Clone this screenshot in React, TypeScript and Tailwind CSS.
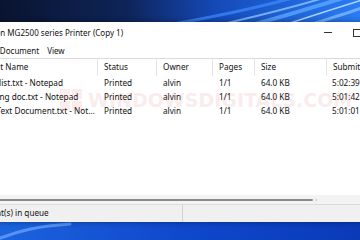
import React from 'react';

const columns = ['Document Name', 'Status', 'Owner', 'Pages', 'Size', 'Submitted'];

const jobs = [
  { name: 'Shipping list.txt - Notepad', status: 'Printed', owner: 'alvin', pages: '1/1', size: '64.0 KB', time: '5:02:39 PM  2/5/2023' },
  { name: 'Onboarding doc.txt - Notepad', status: 'Printed', owner: 'alvin', pages: '1/1', size: '64.0 KB', time: '5:01:42 PM  2/5/2023' },
  { name: 'New Job Text Document.txt - Notepad', status: 'Printed', owner: 'alvin', pages: '1/1', size: '64.0 KB', time: '5:01:01 PM  2/5/2023' },
];

function PrinterIcon() {
  return (
    <svg width="13" height="13" viewBox="0 0 16 16" className="shrink-0">
      <rect x="4" y="1.5" width="8" height="4" fill="#fff" stroke="#555" />
      <rect x="1.5" y="5.5" width="13" height="6" rx="1" fill="#8a8f98" stroke="#4a4f57" />
      <rect x="4" y="9.5" width="8" height="5" fill="#fff" stroke="#555" />
    </svg>
  );
}

function Wallpaper() {
  return (
    <svg className="absolute inset-0" width="360" height="240" viewBox="0 0 360 240">
      <defs>
        <linearGradient id="top" x1="0" y1="0" x2="1" y2="0">
          <stop offset="0" stopColor="#0a1430" />
          <stop offset="0.35" stopColor="#0e2458" />
          <stop offset="0.6" stopColor="#1549b8" />
          <stop offset="1" stopColor="#2a7cf5" />
        </linearGradient>
        <linearGradient id="bot" x1="0" y1="0" x2="1" y2="0">
          <stop offset="0" stopColor="#1c63de" />
          <stop offset="0.5" stopColor="#0f48cc" />
          <stop offset="1" stopColor="#0a3ab8" />
        </linearGradient>
      </defs>
      <rect x="0" y="0" width="360" height="30" fill="url(#top)" />
      <rect x="0" y="215" width="360" height="25" fill="url(#bot)" />
      <g fill="none" strokeLinecap="round">
        <path d="M150 28 C 210 18, 250 10, 300 -4" stroke="#3f8cff" strokeWidth="3" opacity="0.7" />
        <path d="M205 28 C 250 18, 285 10, 330 -4" stroke="#8cc4ff" strokeWidth="2" opacity="0.8" />
        <path d="M240 28 C 280 18, 310 8, 350 -4" stroke="#5aa6ff" strokeWidth="4" opacity="0.8" />
        <path d="M275 28 C 305 18, 330 10, 362 0" stroke="#b4dcff" strokeWidth="1.5" opacity="0.9" />
        <path d="M300 28 C 325 20, 345 14, 362 8" stroke="#7db9ff" strokeWidth="3" opacity="0.8" />
        <path d="M-5 240 C 20 230, 40 226, 70 224" stroke="#6fa8ff" strokeWidth="3" opacity="0.7" />
      </g>
    </svg>
  );
}

export default function App() {
  return (
    <div className="relative w-[360px] h-[240px] overflow-hidden bg-[#0d3fc4] font-['Noto_Sans','Open_Sans',sans-serif] text-[8.2px] text-[#111]">
      <Wallpaper />

      {/* Print queue window */}
      <div className="absolute left-[-44px] top-[22px] w-[444px] h-[200px] bg-white flex flex-col shadow-[0_0_6px_rgba(0,0,0,0.4)]">
        {/* Title bar */}
        <div className="h-[21px] flex items-center">
          <div className="flex items-center gap-[6px] pl-[6px] flex-1">
            <PrinterIcon />
            <span className="text-[8px] leading-none">Canon MG2500 series Printer (Copy 1)</span>
          </div>
          <div className="flex h-full">
            <div className="w-[29px] flex items-center justify-center">
              <div className="w-[8px] h-px bg-[#333]" />
            </div>
            <div className="w-[29px] flex items-center justify-center">
              <div className="w-[8px] h-[8px] border border-[#333]" />
            </div>
            <div className="w-[29px] flex items-center justify-center text-[10px] text-[#333]">✕</div>
          </div>
        </div>

        {/* Menu bar */}
        <div className="h-[15px] flex items-center gap-[8px] pl-[10px] border-b border-[#dadada] box-content text-[8px]">
          <span>Printer</span>
          <span>Document</span>
          <span>View</span>
        </div>

        {/* List view */}
        <div className="flex-1 relative">
          <div className="grid grid-cols-[142px_59px_56px_42px_72px_1fr] h-[17px] items-stretch">
            {columns.map((c, i) => (
              <div
                key={c}
                className={`flex items-center border-r border-[#e5e5e5] whitespace-nowrap overflow-hidden ${i === 0 ? 'pl-[7px]' : 'px-[6px]'}`}
              >
                {c}
              </div>
            ))}
          </div>
          {jobs.map((j) => (
            <div key={j.name} className="grid grid-cols-[142px_59px_56px_42px_72px_1fr] h-[14px] items-center">
              <div className="pl-[7px] pr-[2px] truncate">{j.name}</div>
              <div className="px-[6px]">{j.status}</div>
              <div className="px-[6px]">{j.owner}</div>
              <div className="px-[6px]">{j.pages}</div>
              <div className="px-[6px]">{j.size}</div>
              <div className="px-[5px] whitespace-nowrap">{j.time}</div>
            </div>
          ))}

          {/* watermark */}
          <div className="absolute left-[104px] top-[27px] flex items-center gap-[6px] opacity-[0.08] pointer-events-none">
            <div className="grid grid-cols-2 gap-[2px] w-[22px] h-[22px]">
              <div className="bg-[#d22]" />
              <div className="bg-[#d22]" />
              <div className="bg-[#d22]" />
              <div className="bg-[#d22]" />
            </div>
            <span className="font-['DejaVu_Sans',sans-serif] font-bold text-[19px] text-[#c02020] whitespace-nowrap">
              WINDOWSDIGITALS.COM
            </span>
          </div>
        </div>

        {/* Horizontal scrollbar */}
        <div className="h-[9px] bg-[#f3f3f3] flex items-center">
          <div className="w-[357px] h-[2px] bg-[#8a8a8a] rounded-full" />
          <span className="ml-[2px] text-[7px] leading-none text-[#b5b5b5]">›</span>
        </div>

        {/* Status bar */}
        <div className="h-[18px] bg-[#f0f0f0] border-t border-[#dcdcdc] flex items-center">
          <div className="w-[227px] h-full flex items-center pl-[2px] border-r border-[#d2d2d2]">
            3 document(s) in queue
          </div>
        </div>
      </div>
    </div>
  );
}
